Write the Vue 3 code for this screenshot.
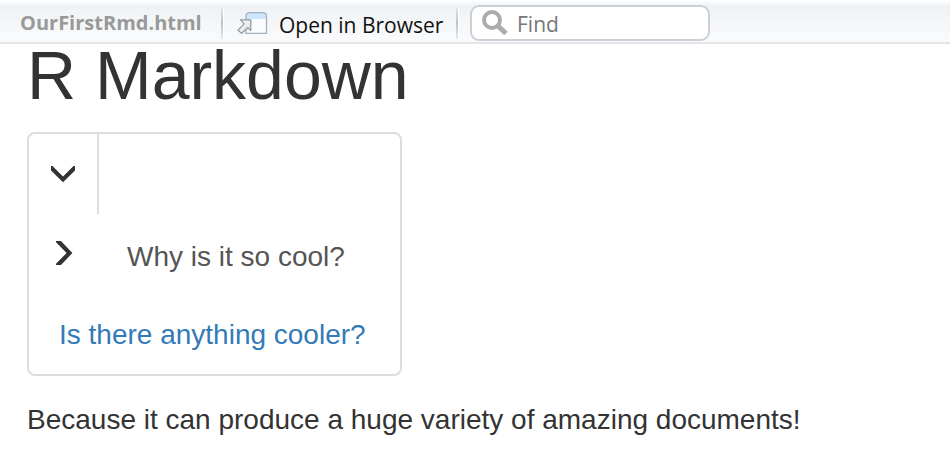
<script setup>
import { ref } from 'vue'

const query = ref('')
</script>

<template>
  <div class="viewer">
    <header class="toolbar">
      <span class="file-name">OurFirstRmd.html</span>
      <span class="divider"></span>
      <button class="open-button" type="button">
        <svg class="open-icon" width="31" height="24" viewBox="0 0 31 24" aria-hidden="true">
          <defs>
            <linearGradient id="arrowFill" x1="0" y1="0" x2="1" y2="1">
              <stop offset="0" stop-color="#ffffff" />
              <stop offset="1" stop-color="#d5dbe0" />
            </linearGradient>
          </defs>
          <path d="M9 22.3V5.5Q9 1.7 13 1.7H25.5Q29.5 1.7 29.5 5.5V22.3Z" fill="#fafcfe" />
          <path d="M9 8V5.5Q9 1.7 13 1.7H25.5Q29.5 1.7 29.5 5.5V8Z" fill="#cfe6fa" />
          <path d="M9 22.3V5.5Q9 1.7 13 1.7H25.5Q29.5 1.7 29.5 5.5V22.3Z" fill="none" stroke="#a3b1c4" stroke-width="1.3" />
          <path d="M3.5 8.8H13.8V19.6L10.8 16.8L4.6 22.4L1 19.2L7.2 12.8Z" fill="url(#arrowFill)" stroke="#8f979f" stroke-width="1.2" stroke-linejoin="round" />
        </svg>
        <span class="open-label">Open in Browser</span>
      </button>
      <span class="divider"></span>
      <label class="search">
        <svg width="28" height="28" viewBox="0 0 28 28" aria-hidden="true">
          <circle cx="11" cy="11" r="8" fill="none" stroke="#a9adb0" stroke-width="4" />
          <path d="M16.5 16.5L25 24.5" stroke="#a9adb0" stroke-width="5" />
        </svg>
        <input v-model="query" type="text" placeholder="Find" aria-label="Find" />
      </label>
    </header>

    <main class="document">
      <h1>R Markdown</h1>
      <nav class="tabs">
        <button class="toggle" type="button" aria-label="Collapse tabs">
          <svg width="26" height="18" viewBox="0 0 26 18" aria-hidden="true">
            <path d="M1 1H2.5L13 11.5L23.5 1H25V5.6L13 17.2L1 5.6Z" fill="#333333" />
          </svg>
        </button>
        <a class="tab" href="#why">
          <svg class="chevron" width="18" height="26" viewBox="0 0 18 26" aria-hidden="true">
            <path d="M1 1H6L17.4 13L6 25H1V23.8L11.6 13L1 2.2Z" fill="#333333" />
          </svg>
          <span>Why is it so cool?</span>
        </a>
        <a class="tab link" href="#cooler">Is there anything cooler?</a>
      </nav>
      <p>Because it can produce a huge variety of amazing documents!</p>
    </main>
  </div>
</template>

<style>
body {
  background: #ffffff;
}
</style>

<style scoped>
.viewer {
  color: #333333;
  font-family: "Liberation Sans", Arial, sans-serif;
}

.toolbar {
  display: flex;
  align-items: center;
  box-sizing: border-box;
  height: 44px;
  padding: 3px 20px 0;
  border-bottom: 2px solid #e3e6e9;
  background: linear-gradient(#ffffff 0, #eff2f4 6px, #fafbfd 100%);
  font-family: "Open Sans", "Noto Sans", sans-serif;
  white-space: nowrap;
}

.file-name {
  width: 201px;
  color: #999997;
  font-size: 20px;
  font-weight: 700;
  line-height: 32px;
}

.divider {
  width: 2px;
  height: 32px;
  border-right: 1px solid #ffffff;
  background: linear-gradient(#e4e7ea, #bfc3c7, #e4e7ea);
}

.open-button {
  display: flex;
  align-items: center;
  gap: 11px;
  width: 232px;
  padding: 0 0 0 13px;
  border: 0;
  background: none;
  color: #111111;
  font: inherit;
  font-size: 21px;
  line-height: 32px;
}

.open-icon {
  flex: none;
}

.open-label {
  padding-top: 4px;
}

.search {
  display: flex;
  align-items: center;
  box-sizing: border-box;
  width: 240px;
  height: 36px;
  margin-left: 11px;
  padding-left: 9px;
  border: 2px solid #cccfd3;
  border-radius: 9px;
  background: #ffffff;
}

.search input {
  flex: 1;
  min-width: 0;
  padding: 2px 8px 0;
  border: 0;
  outline: 0;
  background: none;
  color: #777777;
  font: inherit;
  font-size: 21px;
  line-height: 30px;
}

.search input::placeholder {
  color: #777777;
  opacity: 1;
}

.document {
  padding: 0 27px;
}

h1 {
  margin: 0 0 26px;
  font-size: 68px;
  font-weight: 400;
  line-height: 62px;
}

.tabs {
  display: flex;
  flex-direction: column;
  box-sizing: border-box;
  width: fit-content;
  border: 2px solid #dddddd;
  border-radius: 8px;
  font-size: 28px;
}

.toggle {
  display: flex;
  justify-content: center;
  align-items: center;
  width: 70px;
  height: 80px;
  padding: 0;
  border: 0;
  border-right: 2px solid #dddddd;
  background: none;
}

.tab {
  display: flex;
  align-items: center;
  padding: 24px 34px 16px 30px;
  color: #555555;
  line-height: 38px;
  text-decoration: none;
}

.tab + .tab {
  padding-bottom: 20px;
}

.chevron {
  margin: 0 54px 8px -4px;
}

.link {
  color: #337ab7;
}

p {
  margin: 24px 0;
  font-size: 28px;
  line-height: 40px;
}
</style>
